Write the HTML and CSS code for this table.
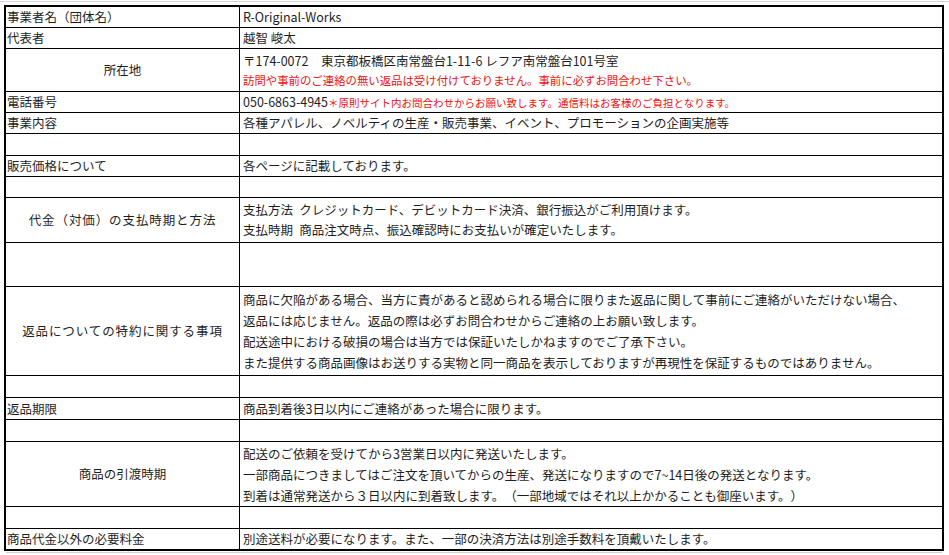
FILE: index.html
```html
<!DOCTYPE html>
<html lang="ja">
<head>
<meta charset="utf-8">
<title>特定商取引法に基づく表記</title>
<link rel="stylesheet" href="styles.css">
</head>
<body>
<div class="topline"></div>
<div class="sheet">
  <div class="row h21"><div class="k">事業者名（団体名）</div><div class="v">R-Original-Works</div></div>
  <div class="row h21"><div class="k">代表者</div><div class="v">越智 峻太</div></div>
  <div class="row h43"><div class="k c">所在地</div><div class="v multi"><div>〒174-0072　東京都板橋区南常盤台1-11-6 レフア南常盤台101号室</div><div class="red r1">訪問や事前のご連絡の無い返品は受け付けておりません。事前に必ずお問合わせ下さい。</div></div></div>
  <div class="row h21"><div class="k">電話番号</div><div class="v"><div>050-6863-4945<span class="red r2">＊原則サイト内お問合わせからお願い致します。通信料はお客様のご負担となります。</span></div></div></div>
  <div class="row h21"><div class="k">事業内容</div><div class="v">各種アパレル、ノベルティの生産・販売事業、イベント、プロモーションの企画実施等</div></div>
  <div class="row h22"><div class="k"></div><div class="v"></div></div>
  <div class="row h21"><div class="k">販売価格について</div><div class="v">各ページに記載しております。</div></div>
  <div class="row h21"><div class="k"></div><div class="v"></div></div>
  <div class="row h45"><div class="k c wide">代金（対価）の支払時期と方法</div><div class="v multi lh20"><div>支払方法&ensp;クレジットカード、デビットカード決済、銀行振込がご利用頂けます。</div><div>支払時期&ensp;商品注文時点、振込確認時にお支払いが確定いたします。</div></div></div>
  <div class="row h44"><div class="k"></div><div class="v"></div></div>
  <div class="row h89"><div class="k c wide">返品についての特約に関する事項</div><div class="v multi"><div>商品に欠陥がある場合、当方に責があると認められる場合に限りまた返品に関して事前にご連絡がいただけない場合、</div><div>返品には応じません。返品の際は必ずお問合わせからご連絡の上お願い致します。</div><div>配送途中における破損の場合は当方では保証いたしかねますのでご了承下さい。</div><div>また提供する商品画像はお送りする実物と同一商品を表示しておりますが再現性を保証するものではありません。</div></div></div>
  <div class="row h22"><div class="k"></div><div class="v"></div></div>
  <div class="row h22"><div class="k">返品期限</div><div class="v">商品到着後3日以内にご連絡があった場合に限ります。</div></div>
  <div class="row h22"><div class="k"></div><div class="v"></div></div>
  <div class="row h65"><div class="k c">商品の引渡時期</div><div class="v multi"><div>配送のご依頼を受けてから3営業日以内に発送いたします。</div><div>一部商品につきましてはご注文を頂いてからの生産、発送になりますので7~14日後の発送となります。</div><div>到着は通常発送から３日以内に到着致します。（一部地域ではそれ以上かかることも御座います。）</div></div></div>
  <div class="row h22"><div class="k"></div><div class="v"></div></div>
  <div class="row h20 last"><div class="k">商品代金以外の必要料金</div><div class="v">別途送料が必要になります。また、一部の決済方法は別途手数料を頂戴いたします。</div></div>
</div>
<div class="shadow"></div>
</body>
</html>
```
FILE: styles.css
```css
html, body {
  margin: 0;
  padding: 0;
  background: #fff;
}
body {
  font-family: "Noto Sans CJK JP", "Noto Sans", sans-serif;
  font-size: 12.5px;
  color: #1e1e1e;
  width: 949px;
  height: 555px;
  overflow: hidden;
  text-spacing-trim: space-all;
}
.topline {
  height: 1px;
  margin-top: 1px;
  background: #d4d4d4;
}
.sheet {
  margin: 3px 0 0 4px;
  width: 936px;
  border: 2px solid #000;
}
.row {
  display: grid;
  grid-template-columns: 234px 1fr;
  border-bottom: 1px solid #000;
  box-sizing: border-box;
}
.row.last { border-bottom: none; }
.h20 { height: 20px; }
.h21 { height: 21px; }
.h22 { height: 22px; }
.h43 { height: 43px; }
.h44 { height: 44px; }
.h45 { height: 45px; }
.h65 { height: 65px; }
.h89 { height: 89px; }
.k, .v {
  display: flex;
  flex-direction: column;
  justify-content: center;
  white-space: nowrap;
  line-height: 20px;
  overflow: hidden;
}
.k {
  border-right: 1px solid #000;
  padding-left: 1px;
}
.k.c {
  align-items: center;
  padding-left: 0;
}
.k.wide { letter-spacing: 0.9px; }
.v { padding-left: 3px; }
.v.multi { line-height: 21px; }
.v.multi.lh20 { line-height: 20px; }
.red { color: #f01010; }
.r1 { font-size: 11.4px; line-height: 19px; }
.r2 { font-size: 10.5px; }
.shadow {
  margin: 1px 0 0 6px;
  width: 936px;
  height: 1px;
  background: #d0d0d0;
}
```
